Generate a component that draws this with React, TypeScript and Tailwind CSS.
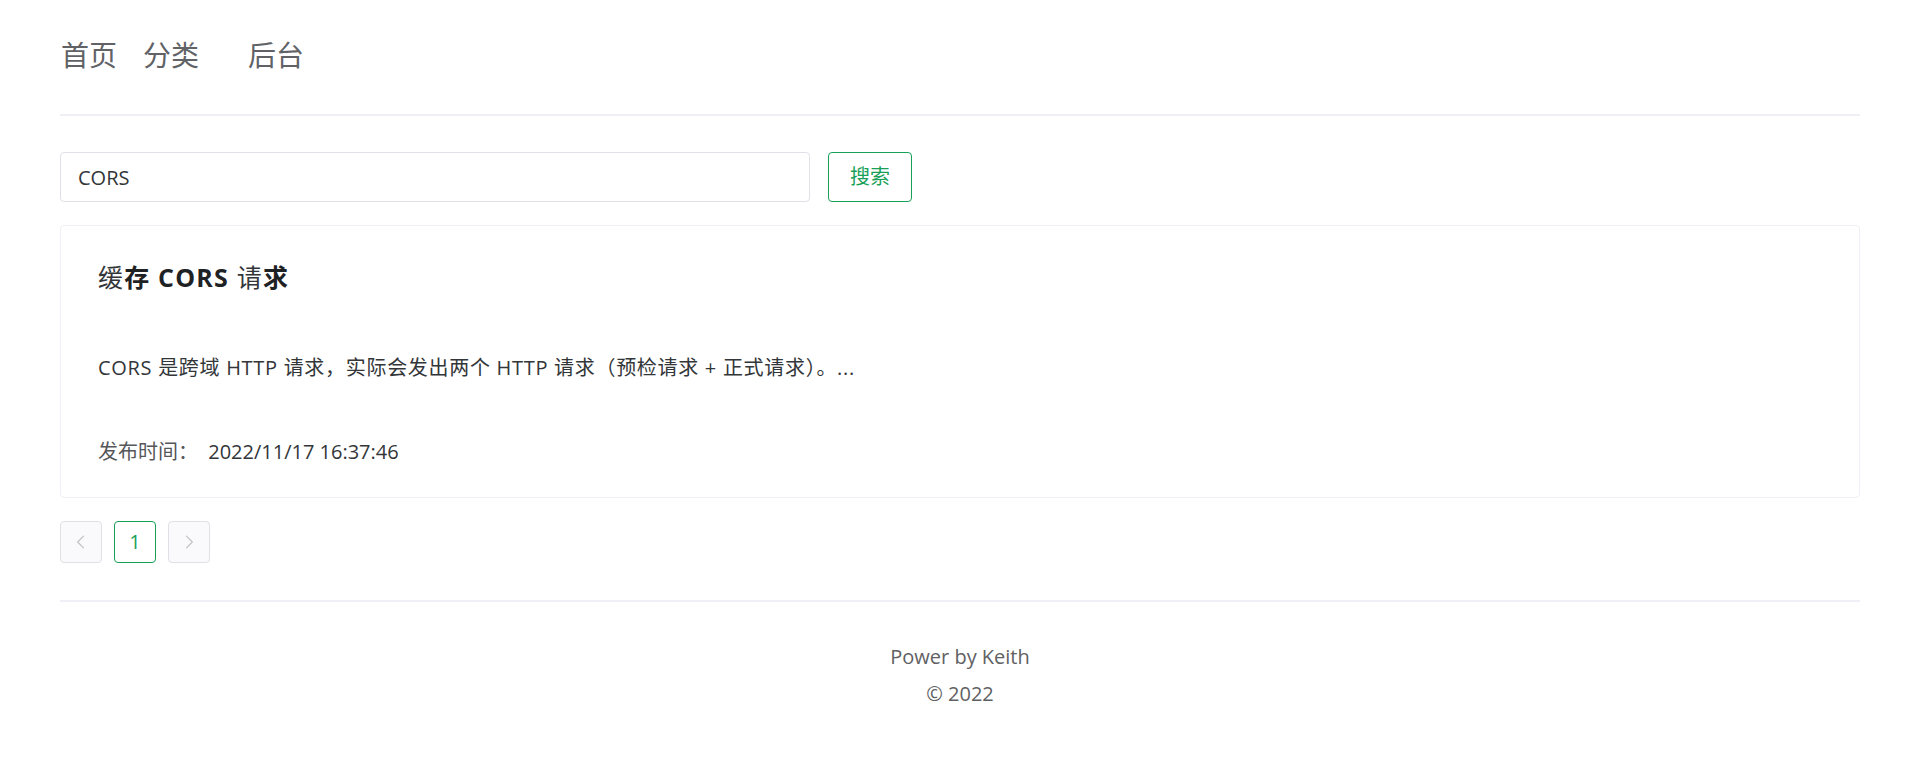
import React from "react";

const FONT = '"Open Sans", "Noto Sans CJK SC", sans-serif';

function Chevron({ dir }: { dir: "left" | "right" }) {
  return (
    <svg width="20" height="20" viewBox="0 0 24 24" fill="none" stroke="#c2c2c2" strokeWidth="1.5" strokeLinecap="round" strokeLinejoin="round">
      {dir === "left" ? <path d="M15 5l-7 7 7 7" /> : <path d="M9 5l7 7-7 7" />}
    </svg>
  );
}

export default function App() {
  return (
    <div className="w-full min-h-[780px] bg-white" style={{ fontFamily: FONT }}>
      <div className="px-[60px]">
        <header className="h-[114px] pt-[41px]">
          <nav className="flex text-[28px] leading-[28px] text-[#606266]">
            <span className="ml-[1px]">首页</span>
            <span className="ml-[26px]">分类</span>
            <span className="ml-[49px]">后台</span>
          </nav>
        </header>
        <div className="h-[2px] bg-[#efeff5]" />

        <div className="mt-[36px] flex items-center">
          <div className="w-[750px] h-[50px] border border-[#e0e0e6] rounded-[4px] px-[17px] pt-[1px] flex items-center text-[20px] text-[#333639]">
            CORS
          </div>
          <button className="ml-[18px] w-[84px] h-[50px] border border-[#18a058] rounded-[4px] text-[20px] text-[#18a058] bg-white">
            搜索
          </button>
        </div>

        <div className="mt-[23px] border border-[#efeff5] rounded-[4px] pt-[36px] pb-[30px] pl-[37px]">
          <div className="h-[30px] leading-[30px] text-[25px] tracking-[1.2px] text-[#1f2225] font-bold">
            <span className="font-normal text-[#333639]">缓</span>存 CORS <span className="font-normal text-[#333639]">请</span>求
          </div>
          <div className="mt-[61px] h-[30px] leading-[30px] text-[20px] tracking-[0.7px] text-[#333639]">
            CORS 是跨域 HTTP 请求，实际会发出两个 HTTP 请求（预检请求 + 正式请求）。...
          </div>
          <div className="mt-[54px] h-[30px] leading-[30px] text-[20px] text-[#333639]">
            <span className="text-[#555759] mr-[5px]">发布时间：</span> 2022/11/17 16:37:46
          </div>
        </div>

        <div className="mt-[23px] flex gap-[12px]">
          <div className="w-[42px] h-[42px] border border-[#e0e0e6] bg-[#fafafc] rounded-[4px] flex items-center justify-center">
            <Chevron dir="left" />
          </div>
          <div className="w-[42px] h-[42px] border border-[#18a058] rounded-[4px] flex items-center justify-center text-[20px] text-[#18a058]">
            1
          </div>
          <div className="w-[42px] h-[42px] border border-[#e0e0e6] bg-[#fafafc] rounded-[4px] flex items-center justify-center">
            <Chevron dir="right" />
          </div>
        </div>

        <div className="mt-[37px] h-[2px] bg-[#efeff5]" />

        <footer className="text-center text-[20px] leading-[30px] text-[#5f6163]">
          <div className="mt-[40px]">Power by Keith</div>
          <div className="mt-[7px]">© 2022</div>
        </footer>
      </div>
    </div>
  );
}
